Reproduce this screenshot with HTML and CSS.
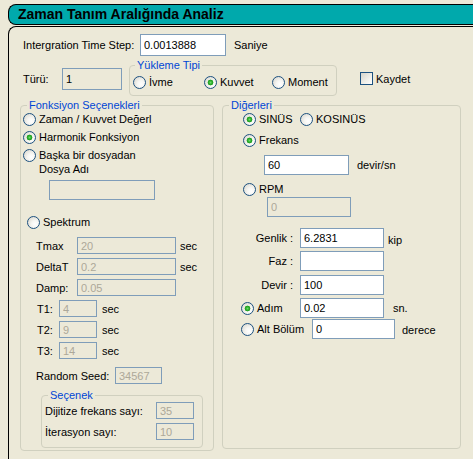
FILE: index.html
```html
<!DOCTYPE html>
<html lang="tr">
<head>
<meta charset="utf-8">
<title>Zaman Tanım Aralığında Analiz</title>
<link rel="stylesheet" href="styles.css">
</head>
<body>
<div class="window">
  <div class="titlebar">Zaman Tanım Aralığında Analiz</div>
  <div class="frame">
    <div class="row1">
      <span class="step-lbl">Intergration Time Step:</span>
      <input class="in step-in" value="0.0013888" readonly>
      <span class="saniye">Saniye</span>
    </div>

    <div class="row2">
      <div class="turu">
        <span class="turu-lbl">Türü:</span>
        <input class="in ro turu-in" value="1" readonly>
      </div>
      <fieldset class="grp yuk">
        <legend>Yükleme Tipi</legend>
        <div class="yuk-in">
          <label class="opt w-ivme"><span class="radio"></span>İvme</label>
          <label class="opt w-kuv"><span class="radio on"></span>Kuvvet</label>
          <label class="opt"><span class="radio"></span>Moment</label>
        </div>
      </fieldset>
      <label class="chk"><span class="box"></span>Kaydet</label>
    </div>

    <div class="row3">
      <fieldset class="grp fonk">
        <legend>Fonksiyon Seçenekleri</legend>
        <div class="fonk-in">
          <label class="opt gap4"><span class="radio"></span>Zaman / Kuvvet Değerl</label>
          <label class="opt gap4"><span class="radio on"></span>Harmonik Fonksiyon</label>
          <label class="opt"><span class="radio"></span>Başka bir dosyadan</label>
          <div class="dosya">Dosya Adı</div>
          <input class="in dis dosya-in" value="" readonly>
          <label class="opt spek"><span class="radio"></span>Spektrum</label>

          <div class="prm first"><span class="pl">Tmax</span><input class="in dis pw" value="20" readonly><span class="u">sec</span></div>
          <div class="prm"><span class="pl">DeltaT</span><input class="in dis pw" value="0.2" readonly><span class="u">sec</span></div>
          <div class="prm"><span class="pl">Damp:</span><input class="in dis pw" value="0.05" readonly></div>

          <div class="prm tr"><span class="pl">T1:</span><input class="in dis tw" value="4" readonly><span class="u">sec</span></div>
          <div class="prm tr"><span class="pl">T2:</span><input class="in dis tw" value="9" readonly><span class="u">sec</span></div>
          <div class="prm tr"><span class="pl">T3:</span><input class="in dis tw" value="14" readonly><span class="u">sec</span></div>

          <div class="prm seed"><span class="pl">Random Seed:</span><input class="in dis sw" value="34567" readonly></div>

          <fieldset class="grp secenek">
            <legend>Seçenek</legend>
            <div class="sec-in">
              <div class="prm sr"><span class="pl">Dijitize frekans sayı:</span><input class="in dis tw" value="35" readonly></div>
              <div class="prm sr second"><span class="pl">İterasyon sayı:</span><input class="in dis tw" value="10" readonly></div>
            </div>
          </fieldset>
        </div>
      </fieldset>

      <fieldset class="grp diger">
        <legend>Diğerleri</legend>
        <div class="diger-in">
          <div class="sin-row">
            <label class="opt"><span class="radio on"></span><span class="lab c-sin">SINÜS</span></label>
            <label class="opt kos"><span class="radio"></span><span class="lab">KOSINÜS</span></label>
          </div>
          <label class="opt ind frek"><span class="radio on"></span>Frekans</label>
          <div class="line frek-line"><input class="in fw" value="60" readonly><span class="u8">devir/sn</span></div>
          <label class="opt ind rpm"><span class="radio"></span>RPM</label>
          <div class="line rpm-line"><input class="in dis fw2" value="0" readonly></div>

          <div class="line fld genlik"><span class="rl">Genlik :</span><input class="in gw" value="6.2831" readonly><span class="kip">kip</span></div>
          <div class="line fld faz"><span class="rl">Faz :</span><input class="in gw" value="" readonly></div>
          <div class="line fld devir"><span class="rl">Devir :</span><input class="in gw" value="100" readonly></div>

          <div class="line radrow adim">
            <label class="opt ropt w-adim"><span class="radio on"></span>Adım</label>
            <input class="in gw" value="0.02" readonly><span class="sn">sn.</span>
          </div>
          <div class="line radrow alt">
            <label class="opt ropt w-alt"><span class="radio"></span>Alt Bölüm</label>
            <input class="in aw" value="0" readonly><span class="derece">derece</span>
          </div>
        </div>
      </fieldset>
    </div>
  </div>
</div>
</body>
</html>
```

FILE: styles.css
```css
* { box-sizing: border-box; }

html, body { margin: 0; padding: 0; }

body {
  width: 473px;
  height: 459px;
  overflow: hidden;
  background: #ECE9D8;
  color: #000;
  font: 11px "Liberation Sans", Arial, sans-serif;
}

.window { padding: 4px 0 0 8px; }

.titlebar {
  height: 21px;
  border: 1px solid #000;
  border-right: 0;
  border-radius: 8px 0 0 8px;
  background: #00A9AC;
  font-weight: bold;
  font-size: 14px;
  line-height: 19px;
  padding-left: 9px;
  white-space: nowrap;
}

.frame {
  margin-top: 1px;
  border-top: 1px solid #000;
  border-left: 1px solid #000;
  border-top-left-radius: 8px;
  height: 433px;
  padding: 7px 0 0 11px;
}

/* text boxes */
.in {
  display: block;
  height: 20px;
  margin: 0;
  padding: 0 0 0 3px;
  border: 1px solid #7F9DB9;
  border-radius: 0;
  background: #fff;
  color: #000;
  font: inherit;
  outline: none;
  flex: none;
}
.ro { background: #ECE9D8; }
.dis { background: #ECE9D8; color: #ACA899; }

/* group boxes (base first so specific rules below win) */
.grp {
  margin: 0;
  padding: 0;
  min-width: 0;
  border: 1px solid #D0D0BF;
  border-radius: 4px;
}
.grp > legend {
  color: #0046D5;
  padding: 0 2px;
  margin-left: 6px;
  line-height: 13px;
}

/* row 1 */
.row1 {
  display: flex;
  align-items: center;
  height: 22px;
  padding-left: 3px;
}
.step-lbl { width: 117px; }
.step-in { width: 86px; height: 22px; }
.saniye { margin-left: 8px; }

/* row 2 */
.row2 {
  display: flex;
  align-items: flex-start;
  margin-top: 3px;
  padding-left: 3px;
}
.turu { display: flex; align-items: center; margin-top: 9px; }
.turu-lbl { width: 39px; }
.turu-in { width: 60px; height: 22px; }

.yuk { margin-left: 7px; width: 208px; }
.yuk > legend { margin-left: 5px; }
.yuk-in { display: flex; padding: 3px 0 6px 3px; }
.w-ivme { width: 71px; }
.w-kuv { width: 68px; }

/* radio buttons */
.opt {
  display: flex;
  align-items: center;
  height: 14px;
  white-space: nowrap;
}
.radio {
  flex: none;
  width: 13px;
  height: 13px;
  margin-right: 3px;
  border: 1px solid #1C5180;
  border-radius: 50%;
  background: radial-gradient(circle at 65% 65%, #ffffff 0, #f6f6f3 35%, #d4d1c6 100%);
}
.radio.on {
  background:
    radial-gradient(circle at 50% 50%, #6fd86f 0, #2cb22c 1.6px, #1f9a1f 2.6px, transparent 3.2px),
    radial-gradient(circle at 65% 65%, #ffffff 0, #f6f6f3 35%, #d4d1c6 100%);
}

/* checkbox */
.chk {
  display: flex;
  align-items: center;
  margin: 13px 0 0 23px;
}
.box {
  width: 13px;
  height: 13px;
  margin-right: 3px;
  border: 1px solid #1C5180;
  background: linear-gradient(135deg, #d6d4ca 0, #f1f0ea 60%, #ffffff 100%);
}

/* row 3 */
.row3 { display: flex; margin-top: 3px; }
.fonk { width: 194px; height: 352px; }
.diger { width: 239px; height: 350px; margin-left: 8px; }

/* left group */
.fonk-in { padding-left: 2px; }
.gap4 { margin-bottom: 4px; }
.dosya { line-height: 14px; margin-left: 16px; }
.dosya-in { width: 106px; margin: 4px 0 0 26px; }
.spek { margin: 15px 0 0 4px; }

.prm {
  display: flex;
  align-items: center;
  margin: 4px 0 0 13px;
}
.prm.first { margin-top: 8px; }
.prm .pl { width: 41px; flex: none; }
.prm .in { height: 17px; }
.pw { width: 99px; }
.prm .u { margin-left: 4px; }

.prm.tr { margin-left: 14px; }
.prm.tr .pl { width: 22px; }
.tw { width: 38px; }
.prm.tr .u { margin-left: 5px; }

.prm.seed { margin-top: 8px; }
.prm.seed .pl { width: 79px; }
.sw { width: 47px; }

.secenek { width: 162px; height: 59px; margin: 5px 0 0 18px; }
.sec-in { padding-left: 3px; }
.prm.sr { margin: 0; }
.prm.sr.second { margin-top: 4px; }
.prm.sr .pl { width: 111px; }

/* right group */
.diger-in { display: flex; flex-direction: column; align-items: flex-start; }
.sin-row { display: flex; padding-left: 20px; }
.lab { display: block; }
.c-sin { width: 32px; }
.kos { margin-left: 9px; }

.ind { margin-left: 20px; }
.frek { margin-top: 7px; }
.rpm { margin-top: 7px; }

.line { display: flex; align-items: center; }
.frek-line { margin: 8px 0 0 41px; }
.fw { width: 85px; }
.u8 { margin-left: 8px; }
.rpm-line { margin: 1px 0 0 44px; }
.fw2 { width: 84px; }

.fld .rl { width: 70px; text-align: right; margin-right: 7px; }
.gw { width: 84px; }
.genlik { margin-top: 11px; }
.kip { margin: 4px 0 0 4px; }
.faz { margin-top: 3px; }
.devir { margin-top: 4px; }

.radrow { padding-left: 18px; }
.adim { margin-top: 3px; }
.alt { margin-top: 1px; }
.w-adim { width: 59px; }
.w-alt { width: 71px; }
.sn { margin-left: 9px; }
.aw { width: 83px; }
.derece { margin: 2px 0 0 7px; }
```
